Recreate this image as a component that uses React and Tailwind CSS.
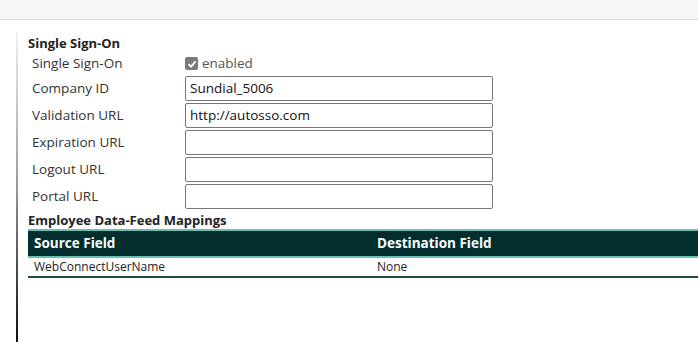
import React from "react";

const fields = [
  { label: "Company ID", value: "Sundial_5006" },
  { label: "Validation URL", value: "http://autosso.com" },
  { label: "Expiration URL", value: "" },
  { label: "Logout URL", value: "" },
  { label: "Portal URL", value: "" },
];

const mappings = [{ source: "WebConnectUserName", destination: "None" }];

const App = () => {
  return (
    <div className="w-[698px] h-[342px] bg-white overflow-hidden font-['Open_Sans',sans-serif] text-[#333]">
      <div className="h-[20px] bg-[#f6f6f6] border-b border-[#d9d9d9]" />

      <div className="flex h-[322px]">
        <div className="shrink-0 ml-[16px] mt-[12px] w-[2px] bg-linear-to-b from-[#f2f2f2] via-[#9a9a9a] to-[#111]" />

        <div className="ml-[10px] pt-[15px] flex-1 min-w-0">
          <h2 className="text-[13px] font-bold text-[#222] leading-[17px]">Single Sign-On</h2>

          <div className="pl-[4px]">
            <div className="flex items-center h-[23px]">
              <span className="w-[153px] text-[13.5px]">Single Sign-On</span>
              <label className="flex items-center gap-[4px] text-[13.5px] text-[#555]">
                <span className="w-[13px] h-[13px] rounded-[2px] bg-[#7b7b7b] flex items-center justify-center">
                  <svg width="10" height="10" viewBox="0 0 10 10">
                    <path d="M1.5 5.2 L4 7.6 L8.6 2.4" fill="none" stroke="white" strokeWidth="1.8" />
                  </svg>
                </span>
                enabled
              </label>
            </div>

            {fields.map((f) => (
              <div key={f.label} className="flex items-center h-[27px]">
                <span className="w-[153px] text-[13.5px]">{f.label}</span>
                <div className="w-[308px] h-[25px] border border-[#767676] rounded-[2px] px-[4px] flex items-center text-[13.5px] text-[#111]">
                  {f.value}
                </div>
              </div>
            ))}
          </div>

          <h2 className="mt-[2px] text-[13px] font-bold text-[#222] leading-[17px]">Employee Data-Feed Mappings</h2>

          <table className="w-[690px] border-collapse text-left">
            <thead>
              <tr className="bg-[#022e2e] text-white border-y-2 border-[#6cbdb7]">
                <th className="w-[343px] h-[27px] px-[6px] text-[13.5px] font-bold">Source Field</th>
                <th className="px-[6px] text-[13.5px] font-bold">Destination Field</th>
              </tr>
            </thead>
            <tbody>
              {mappings.map((m) => (
                <tr key={m.source} className="border-b-2 border-[#1d4a47] text-[12px] text-[#222]">
                  <td className="h-[19px] px-[6px]">{m.source}</td>
                  <td className="px-[6px]">{m.destination}</td>
                </tr>
              ))}
            </tbody>
          </table>
        </div>
      </div>
    </div>
  );
};

export default App;
